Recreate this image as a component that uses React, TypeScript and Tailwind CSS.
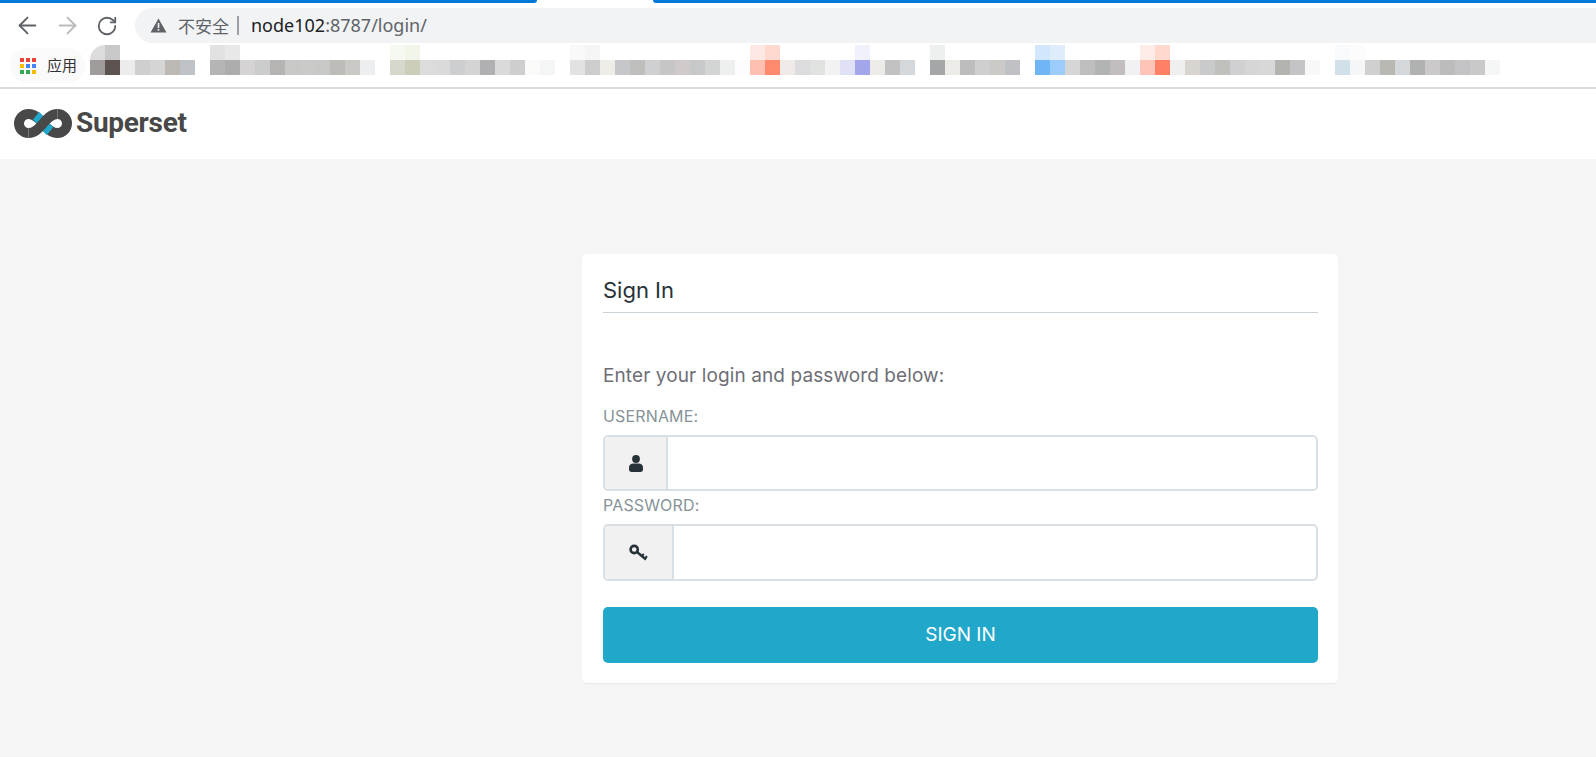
import { ArrowLeft, ArrowRight, RotateCw } from "lucide-react";

// mosaic of the blurred bookmarks, one colour per 15px cell from x=90
const mosaicBottom = [
  "#a09c9b", "#5c5351", "#ececec", "#cfcfcf", "#d5d5d5", "#bcb8b4", "#bfc3c8", "#ffffff",
  "#b5b5b5", "#adadad", "#d5d3d3", "#cbcccc", "#b6b4b2", "#c8c8c6", "#cacac8", "#c8c8c6",
  "#bebcb8", "#cac9c5", "#edeef0", "#ffffff", "#d6d8cc", "#ccceba", "#dcdcdc", "#dadada",
  "#ccced0", "#d4d4d4", "#b0b0b2", "#dadada", "#cecece", "#fafaf8", "#f4f6f5", "#ffffff",
  "#e2e2e2", "#cdcdcd", "#efede7", "#c6c7cb", "#bebebc", "#cfd0d2", "#c6c6c6", "#d0cbca",
  "#c6c8ca", "#d2d5d3", "#edf0ef", "#fdfdff", "#ffbfb1", "#ff8a6e", "#efeae8", "#dcdcde",
  "#e0e2e0", "#f2f2f2", "#e0e0f6", "#a4a6ec", "#ecebe8", "#c2c2c2", "#d4d8db", "#ffffff",
  "#a5a6a8", "#ecebe8", "#bdbdbd", "#cfcfcf", "#cbcac7", "#c0c1c4", "#ffffff", "#70b5f6",
  "#9cccfa", "#d6d6d6", "#bebebe", "#b2b3b3", "#c2bdbf", "#f1f1f3", "#ffc4b8", "#ff8064",
  "#efefef", "#d8d4d0", "#c9cacc", "#c0c0bc", "#d0d0d2", "#d6d6d6", "#d8d8d8", "#b3b3b0",
  "#c4c4c6", "#f8f8f8", "#ffffff", "#d2e0ea", "#f5f6f8", "#d0d0d0", "#b9b8b3", "#d5d8da",
  "#b0b2b1", "#cbc9c9", "#bcbcbc", "#c3c3c5", "#c9c9c9", "#f5f6f6",
];

const mosaicTop: [number, string][] = [
  [105, "#c8c8c8"], [210, "#e2e2e2"], [225, "#e8e8e8"], [390, "#f6f8f2"], [405, "#f2f5ea"],
  [570, "#f9f9f9"], [585, "#f5f5f5"], [750, "#fee8e3"], [765, "#ffd8d0"], [855, "#f1f1fc"],
  [930, "#eeefef"], [1035, "#d2e7fc"], [1050, "#deecfb"], [1140, "#feece8"], [1155, "#ffd8ce"],
  [1335, "#f9fafc"], [1350, "#fcfcfd"],
];

const appDots = ["#ea4335", "#ea4335", "#ea4335", "#fbbc04", "#4285f4", "#4285f4", "#34a853", "#34a853", "#fbbc04"];

function BlurredBookmarks() {
  return (
    <svg className="block shrink-0" width="1420" height="30" viewBox="90 45 1420 30">
      <path d="M105 45a15 15 0 0 0-15 15h15z" fill="#dcdcdc" />
      {mosaicTop.map(([x, fill]) => (
        <rect key={x} x={x} y={45} width={15} height={15} fill={fill} />
      ))}
      {mosaicBottom.map((fill, i) => (
        <rect key={i} x={90 + i * 15} y={60} width={15} height={15} fill={fill} />
      ))}
    </svg>
  );
}

function TabStrip() {
  return (
    <div className="flex h-[3px]">
      <div className="w-[537px] bg-[#0078d7] rounded-br-[3px]" />
      <div className="w-[116px] bg-white" />
      <div className="flex-1 bg-[#0078d7] rounded-bl-[3px]" />
    </div>
  );
}

function WarningIcon() {
  return (
    <svg width="17" height="15" viewBox="0 0 17 15" className="block">
      <path d="M8.5 0.5 16.5 14.5H0.5Z" fill="#5f6368" />
      <rect x="7.7" y="5" width="1.6" height="5" fill="#f1f3f4" />
      <rect x="7.7" y="11" width="1.6" height="1.7" fill="#f1f3f4" />
    </svg>
  );
}

function Toolbar() {
  return (
    <div className="flex items-center h-[35px] mt-[5px]">
      <div className="flex items-center w-[135px] pl-[7px] shrink-0">
        <span className="flex justify-center w-[40px]">
          <ArrowLeft size={27} strokeWidth={1.7} className="text-[#5f6368]" />
        </span>
        <span className="flex justify-center w-[40px]">
          <ArrowRight size={27} strokeWidth={1.7} className="text-[#b9bbbd]" />
        </span>
        <span className="flex justify-center w-[40px]">
          <RotateCw size={22} strokeWidth={2} className="text-[#5f6368]" />
        </span>
      </div>
      <div className="flex-1 h-full bg-[#f1f3f4] rounded-l-[18px] flex items-center pl-[15px] font-['Noto_Sans','Noto_Sans_CJK_SC',sans-serif] text-[18px]">
        <WarningIcon />
        <span className="ml-[11px] text-[#5f6368] text-[17px] font-['Noto_Sans_CJK_SC',sans-serif]">不安全</span>
        <span className="ml-[8px] w-[2px] h-[19px] bg-[#9aa0a6]" />
        <span className="ml-[12px] text-[#202124]">node102</span>
        <span className="text-[#5f6368]">:8787/login/</span>
      </div>
    </div>
  );
}

function BookmarksBar() {
  return (
    <div className="flex items-start h-[46px] border-b-2 border-[#dcdcdc]">
      <div className="flex items-center h-[35px] w-[75px] ml-[10px] mt-[5px] shrink-0 rounded-full bg-[#fafafa]">
        <div className="grid grid-cols-3 gap-[2px] ml-[10px]">
          {appDots.map((color, i) => (
            <span key={i} className="block size-[4px]" style={{ backgroundColor: color }} />
          ))}
        </div>
        <span className="ml-[11px] text-[15px] text-[#333] font-['Noto_Sans_CJK_SC',sans-serif]">应用</span>
      </div>
      <div className="ml-[5px] mt-[2px]">
        <BlurredBookmarks />
      </div>
    </div>
  );
}

function InfinityLogo() {
  return (
    <svg width="58" height="29" viewBox="0 0 58 29" className="block shrink-0">
      <g fill="none" strokeWidth="10">
        <path
          d="M14.5 5C21 5 25 9.5 29 14.5C33 19.5 37 24 43.5 24A9.5 9.5 0 0 0 43.5 5M14.5 5A9.5 9.5 0 0 0 14.5 24"
          stroke="#484848"
        />
        <path d="M22 6.8C24.5 8.8 27 12 29 14.5C31 17 33.5 20.2 36 22.2" stroke="#20a7c9" />
        <path d="M14.5 24C21 24 25 19.5 29 14.5C33 9.5 37 5 43.5 5" stroke="#484848" />
      </g>
    </svg>
  );
}

function Navbar() {
  return (
    <div className="flex items-center gap-[4px] h-[70px] pl-[14px] pb-[2px] bg-white">
      <InfinityLogo />
      <span className="font-['Roboto',sans-serif] font-bold text-[28px] tracking-[-0.3px] text-[#484848]">Superset</span>
    </div>
  );
}

function UserIcon() {
  return (
    <svg width="14" height="17" viewBox="0 0 14 17" className="block" fill="#263238">
      <circle cx="7" cy="4" r="3.9" />
      <path d="M0 14.5V12.5C0 10 2 8.6 4.2 8.6H9.8C12 8.6 14 10 14 12.5V14.5C14 16 13 17 11.5 17H2.5C1 17 0 16 0 14.5Z" />
    </svg>
  );
}

function KeyIcon() {
  return (
    <svg width="19" height="17" viewBox="0 0 19 17" className="block" fill="none" stroke="#263238">
      <circle cx="5.2" cy="5.5" r="3.6" strokeWidth="2.6" />
      <path d="M8 8 17 15.5" strokeWidth="2.4" />
      <path d="M13 12 14.8 9.8M16 14.5 18 12.2" strokeWidth="2" />
    </svg>
  );
}

function InputRow({ icon, addonWidth, height }: { icon: React.ReactNode; addonWidth: string; height: string }) {
  return (
    <div className={`flex ${height} border-2 border-[#d8e0e5] rounded-[5px] overflow-hidden bg-white`}>
      <div className={`flex items-center justify-center ${addonWidth} bg-[#f1f1f1] border-r-2 border-[#d8e0e5] shrink-0`}>{icon}</div>
      <input className="flex-1 min-w-0 outline-none bg-transparent" />
    </div>
  );
}

function LoginCard() {
  return (
    <div className="ml-[582px] mt-[95px] w-[756px] h-[429px] bg-white rounded-[5px] shadow-[0_1px_1px_rgba(0,0,0,0.05)] pl-[21px] pr-[20px] font-['Inter',sans-serif]">
      <div className="flex items-center h-[59px] pt-[14px] border-b border-[#ccd3d8] text-[22px] text-[#263238]">Sign In</div>
      <p className="mt-[51px] h-[24px] leading-[24px] text-[19px] tracking-[0.1px] text-[#6e6e75]">Enter your login and password below:</p>
      <label className="block mt-[18px] h-[20px] leading-[20px] text-[16px] tracking-[0.15px] text-[#879399]">USERNAME:</label>
      <div className="mt-[9px]">
        <InputRow icon={<UserIcon />} addonWidth="w-[63px]" height="h-[56px]" />
      </div>
      <label className="block mt-[4px] h-[20px] leading-[20px] text-[16px] tracking-[0.15px] text-[#879399]">PASSWORD:</label>
      <div className="mt-[9px]">
        <InputRow icon={<KeyIcon />} addonWidth="w-[69px]" height="h-[57px]" />
      </div>
      <button className="block w-full h-[56px] mt-[26px] rounded-[5px] bg-[#20a7c9] text-white text-[19px]">SIGN IN</button>
    </div>
  );
}

export default function App() {
  return (
    <div className="h-[757px] overflow-hidden bg-[#f5f5f5]">
      <div className="bg-white">
        <TabStrip />
        <Toolbar />
        <BookmarksBar />
      </div>
      <Navbar />
      <LoginCard />
    </div>
  );
}
